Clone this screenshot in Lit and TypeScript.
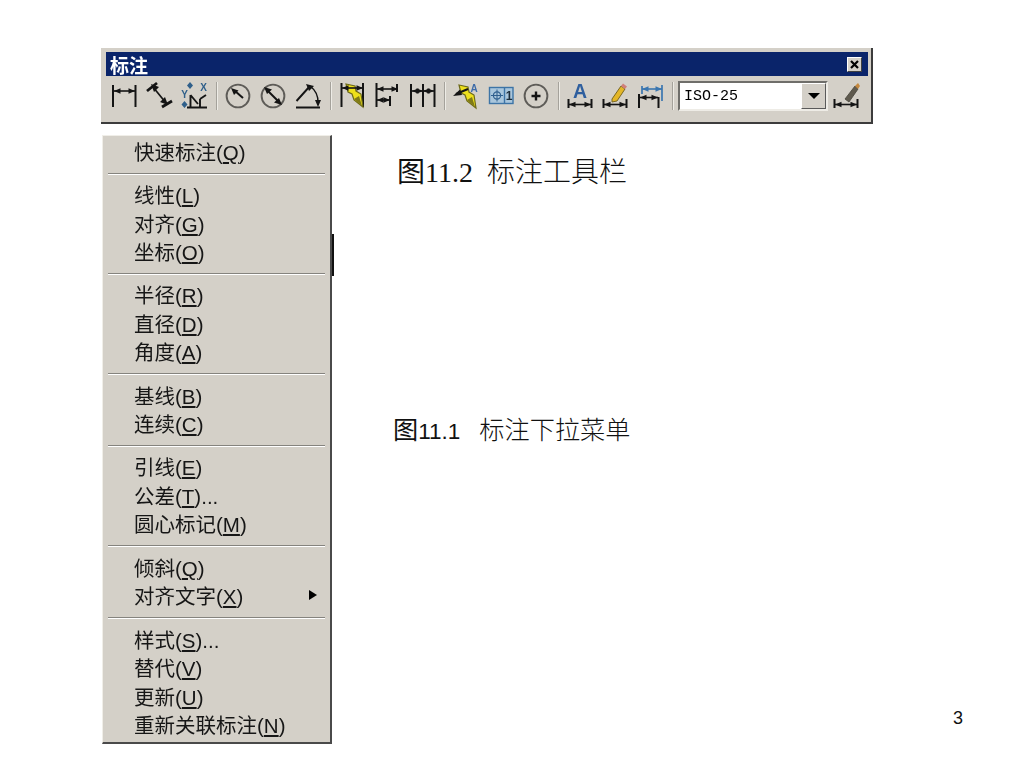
import { LitElement, html, css, svg } from "lit";
import { customElement } from "lit/decorators.js";

const INK = "#141414";
const arrowR = (x: number, y: number, c = INK) => svg`<path d="M${x} ${y}l-6.5 -2.8v5.6z" fill=${c}/>`;
const arrowL = (x: number, y: number, c = INK) => svg`<path d="M${x} ${y}l6.5 -2.8v5.6z" fill=${c}/>`;
const hdim = (x1: number, x2: number, y: number, c = INK) =>
  svg`<path d="M${x1} ${y}H${x2}" stroke=${c} stroke-width="1.6"/>${arrowL(x1, y, c)}${arrowR(x2, y, c)}`;
const vline = (x: number, y1: number, y2: number, c = INK, w = 2) =>
  svg`<path d="M${x} ${y1}V${y2}" stroke=${c} stroke-width=${w}/>`;
const ring = (cx: number) =>
  svg`<circle cx=${cx} cy="97" r="11.4" fill="none" stroke="#5e5c58" stroke-width="1.9"/>`;
const bolt = (dx: number, dy: number) => svg`<g transform="translate(${dx} ${dy})">
  <path d="M5 2L14 4L15 9L20 12L22 25L13 18L11 12L7 10Z" fill="#eee01c" stroke="#6d6a18" stroke-width="1.2"/>
  <path d="M18 14L21 24L13 17Z" fill="#7f7a18"/></g>`;
const baseDim = (x1: number, x2: number) => svg`
  ${vline(x1 + 0.5, 100, 109)}${vline(x2 - 0.5, 100, 109)}${hdim(x1 + 1, x2 - 1, 105.5)}`;

const ICONS = [
  { x: 111, body: svg`${vline(113, 86, 108)}${vline(135.5, 86, 108)}${hdim(114, 135, 92)}` },
  {
    x: 146,
    body: svg`<path d="M147 92L157 84M162 108L172 102" stroke=${INK} stroke-width="2.8"/>
    <path d="M153 88L166 104" stroke=${INK} stroke-width="1.7"/>
    <path d="M151 85L159 88L154 93ZM168 106L160 103L165 98Z" fill=${INK}/>`,
  },
  {
    x: 181,
    body: svg`<path d="M187 108.5H207M190.5 96V109M190.5 96L198 105M200 100V109M200 100L206 96" fill="none" stroke=${INK} stroke-width="1.9"/>
    <path d="M190 83l3 3.5 -3 3.5 -3 -3.5zM184.5 102l3 3.5 -3 3.5 -3 -3.5z" fill="#2f5f8a"/>
    <text x="184.5" y="98.5" font-size="10" font-weight="700" font-family="Liberation Sans" fill="#2f5f8a" text-anchor="middle">Y</text>
    <text x="203.5" y="92" font-size="10" font-weight="700" font-family="Liberation Sans" fill="#2f5f8a" text-anchor="middle">X</text>`,
  },
  {
    x: 225,
    body: svg`${ring(238)}<path d="M243 99L235 92" stroke=${INK} stroke-width="2"/><path d="M231 89L238.5 91.5L234 96Z" fill=${INK}/>`,
  },
  {
    x: 260,
    body: svg`${ring(273)}<path d="M267 91L279 103" stroke=${INK} stroke-width="2"/>
    <path d="M264 88L272 90.5L267 95ZM282 106L274 103.5L279 99Z" fill=${INK}/>`,
  },
  {
    x: 295,
    body: svg`<path d="M296 108.5H320M296.5 102L310 87" fill="none" stroke=${INK} stroke-width="1.9"/>
    <path d="M310 87A20 20 0 0 1 318 104" fill="none" stroke=${INK} stroke-width="1.5"/>
    <path d="M306 85L314 87L309 92ZM318 108L315 101H321Z" fill=${INK}/>`,
  },
  { x: 339, body: svg`${vline(341.5, 84, 108)}${vline(363, 84, 108)}${bolt(341, 83)}${hdim(342, 363, 89)}` },
  {
    x: 374,
    body: svg`${vline(376.5, 84, 108)}${vline(397, 85, 93)}${vline(390, 97, 107)}${hdim(377, 398, 90)}${hdim(377, 390, 101)}`,
  },
  {
    x: 409,
    body: svg`${vline(411, 85, 108)}${vline(423, 85, 108)}${vline(434.5, 85, 108)}${hdim(412, 423, 92)}${hdim(423, 434, 92)}`,
  },
  {
    x: 453,
    body: svg`${bolt(454, 84)}<path d="M468 90L456 95" stroke=${INK} stroke-width="2"/><path d="M453 97L460 90.5L462 96Z" fill=${INK}/>
    <text x="474" y="93" font-size="10" font-weight="700" font-family="Liberation Sans" fill="#3d6ba8" text-anchor="middle">A</text>`,
  },
  {
    x: 488,
    body: svg`<rect x="489.5" y="88.5" width="23.5" height="16" fill="#a9c6dc" stroke="#3d74a6" stroke-width="1.4"/>
    <path d="M504.5 88.5V104.5" stroke="#3d74a6" stroke-width="1.4"/>
    <circle cx="497" cy="96.5" r="3.6" fill="none" stroke="#2f5f8e" stroke-width="1.2"/>
    <path d="M497 90.5V102.5M491 96.5H503" stroke="#2f5f8e"/>
    <text x="509" y="101" font-size="12" font-weight="700" font-family="Liberation Sans" fill="#1d2d3a" text-anchor="middle">1</text>`,
  },
  {
    x: 523,
    body: svg`${ring(536)}<path d="M536 92.5V101.5M531.5 97H540.5" stroke=${INK} stroke-width="2.4"/>`,
  },
  {
    x: 567,
    body: svg`<text x="580" y="99" font-size="19.5" font-weight="700" font-family="Liberation Sans" fill="#2f5f9e" text-anchor="middle">A</text>${baseDim(568, 592)}`,
  },
  {
    x: 602,
    body: svg`<path d="M612 100L621 87L625 90L617 102L612 103Z" fill="#e3b628" stroke="#6e5c18" stroke-width="0.9"/>
    <path d="M621 87L623 84.5L627 87.5L625 90Z" fill="#d07f7a"/>${baseDim(603, 627)}`,
  },
  {
    x: 637,
    body: svg`${vline(642, 87, 95, "#3a76b0", 1.7)}${vline(662, 86, 102, "#3a76b0", 1.7)}${hdim(642, 662, 90, "#3a76b0")}
    ${vline(639, 95, 109)}${vline(658.5, 98, 109)}${hdim(640, 658, 98.5)}`,
  },
  {
    x: 833,
    body: svg`<path d="M845 100L855 87L858 90L849 103Z" fill="#5f5a4e" stroke="#45423a" stroke-width="0.8"/>
    <path d="M855 87L858 84L860 87L858 90Z" fill="#c4883f"/>${baseDim(834, 858)}`,
  },
];

type Row = [string, string, string?, boolean?];
const GROUPS: Row[][] = [
  [["快速标注", "Q"]],
  [["线性", "L"], ["对齐", "G"], ["坐标", "O"]],
  [["半径", "R"], ["直径", "D"], ["角度", "A"]],
  [["基线", "B"], ["连续", "C"]],
  [["引线", "E"], ["公差", "T", "..."], ["圆心标记", "M"]],
  [["倾斜", "Q"], ["对齐文字", "X", "", true]],
  [["样式", "S", "..."], ["替代", "V"], ["更新", "U"], ["重新关联标注", "N"]],
];

@customElement("app-root")
export class AppRoot extends LitElement {
  static styles = css`
    :host {
      display: flex;
      flex-direction: column;
      box-sizing: border-box;
      width: 1024px;
      height: 768px;
      padding: 48px 61px 0 101px;
      background: #fff;
      overflow: hidden;
      font-family: "Liberation Sans", "Noto Sans CJK SC", sans-serif;
    }
    .toolbar {
      box-sizing: border-box;
      width: 772px;
      height: 76px;
      flex: none;
      padding: 4px 3px 0 5px;
      background: #d4d0c8;
      border-right: 2px solid #3c3c3c;
      border-bottom: 2px solid #3c3c3c;
      filter: blur(0.3px);
    }
    .title {
      height: 24px;
      display: flex;
      align-items: center;
      justify-content: space-between;
      padding: 0 6px 0 4px;
      background: #0a246a;
      color: #fff;
      font-size: 19px;
      font-weight: 700;
    }
    .close {
      box-sizing: border-box;
      width: 15px;
      height: 15px;
      display: flex;
      background: #d4d0c8;
      border: 1px solid;
      border-color: #fff #404040 #404040 #fff;
    }
    .close svg {
      width: 13px;
      height: 13px;
    }
    .tools {
      display: flex;
      align-items: center;
      gap: 9px;
      padding: 5px 0 0 5px;
    }
    .icon {
      flex: none;
      width: 26px;
      height: 28px;
      overflow: visible;
    }
    .sep {
      flex: none;
      box-sizing: border-box;
      width: 2px;
      height: 28px;
      margin-right: -2px;
      background: #a5a29b;
      border-right: 1px solid #eeece6;
    }
    .combo {
      flex: none;
      box-sizing: border-box;
      width: 150px;
      height: 30px;
      margin: 0 -4px 0 -3px;
      display: flex;
      align-items: center;
      justify-content: space-between;
      background: #fff;
      border: 2px solid;
      border-color: #6f6e6a #eeece6 #eeece6 #6f6e6a;
      font-family: "Liberation Mono", monospace;
      font-size: 15px;
      color: #000;
      padding-left: 4px;
    }
    .drop {
      box-sizing: border-box;
      width: 25px;
      height: 26px;
      display: flex;
      align-items: center;
      justify-content: center;
      background: #d4d0c8;
      border: 1px solid;
      border-color: #fff #5a5a5a #5a5a5a #fff;
    }
    .drop i {
      border-style: solid;
      border-width: 6px 6px 0;
      border-color: #000 transparent transparent;
    }
    .below {
      flex: 1;
      display: flex;
      margin-top: 11px;
    }
    .menu {
      position: relative;
      box-sizing: border-box;
      flex: none;
      align-self: flex-start;
      width: 230px;
      margin-left: 1px;
      padding: 0.5px 0 4px;
      background: #d4d0c8;
      border: 1px solid #f0eee8;
      border-right: 2px solid #4a4a4a;
      border-bottom: 2px solid #4a4a4a;
      color: #161616;
      font-size: 20.5px;
      filter: blur(0.3px);
    }
    .row {
      box-sizing: border-box;
      height: 28.5px;
      padding: 0 13px 0 31px;
      display: flex;
      align-items: center;
      justify-content: space-between;
      white-space: nowrap;
    }
    .rule {
      height: 1px;
      margin: 7.5px 5px 5.3px;
      background: #85837e;
      border-bottom: 1px solid #fff;
    }
    .more {
      border-style: solid;
      border-width: 5px 0 5px 8px;
      border-color: transparent transparent transparent #000;
    }
    .edge {
      position: absolute;
      top: 98px;
      right: -4px;
      width: 2px;
      height: 42px;
      background: #111;
    }
    .notes {
      flex: none;
      display: flex;
      flex-direction: column;
      margin-left: 65px;
      color: #111;
    }
    .cap-a {
      margin-top: 21px;
      font: 28px/34px "Liberation Serif", "Noto Sans CJK SC", serif;
      white-space: pre;
    }
    .cap-b {
      margin: 225px 0 0 -4px;
      font: 25.2px/30px "Liberation Sans", "Noto Sans CJK SC", sans-serif;
      white-space: pre;
    }
    .num {
      font-size: 22.5px;
    }
    .gap-b {
      margin-left: 5px;
    }
    .cjk {
      font-weight: 300;
    }
    .page {
      margin-left: auto;
      align-self: flex-end;
      margin-bottom: 37px;
      font-size: 18px;
      line-height: 25px;
      color: #111;
    }
  `;

  private tools() {
    const out: unknown[] = [];
    ICONS.forEach((ic, i) => {
      out.push(html`<svg class="icon" viewBox="${ic.x} 83 26 28">${ic.body}</svg>`);
      if (i === 2 || i === 5 || i === 8 || i === 11 || i === 14) out.push(html`<span class="sep"></span>`);
      if (i === 14)
        out.push(html`<div class="combo">ISO-25<span class="drop"><i></i></span></div>`);
    });
    return out;
  }

  render() {
    return html`
      <div class="toolbar">
        <div class="title">
          <span>标注</span>
          <span class="close">
            <svg viewBox="0 0 13 13"><path d="M3 3L10 10M10 3L3 10" stroke="#000" stroke-width="2.2"/></svg>
          </span>
        </div>
        <div class="tools">${this.tools()}</div>
      </div>
      <div class="below">
        <div class="menu">
          <span class="edge"></span>
          ${GROUPS.map(
            (g, i) => html`
              ${i ? html`<div class="rule"></div>` : ""}
              ${g.map(
                ([t, k, tail, sub]) => html`<div class="row">
                  <span>${t}(<u>${k}</u>)${tail ?? ""}</span>
                  ${sub ? html`<i class="more"></i>` : ""}
                </div>`
              )}
            `
          )}
        </div>
        <div class="notes">
          <div class="cap-a">图11.2  <span class="cjk">标注工具栏</span></div>
          <div class="cap-b">图<span class="num">11.1</span>  <span class="cjk gap-b">标注下拉菜单</span></div>
        </div>
        <div class="page">3</div>
      </div>
    `;
  }
}
